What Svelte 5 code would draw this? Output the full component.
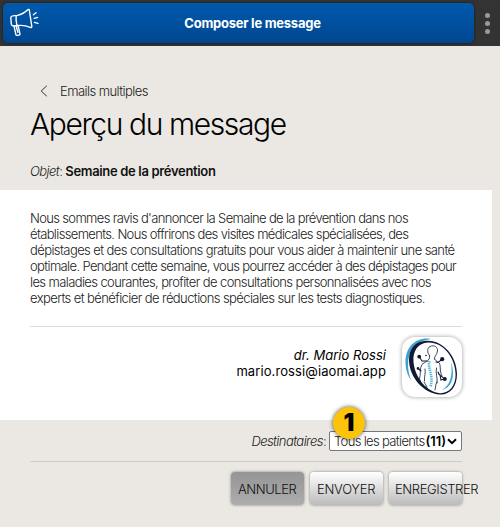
<script>
  const lines = [
    { text: "Nous sommes ravis d'annoncer la Semaine de la prévention dans nos", track: -0.66 },
    { text: 'établissements. Nous offrirons des visites médicales spécialisées, des', track: -0.65 },
    { text: 'dépistages et des consultations gratuits pour vous aider à maintenir une santé', track: -0.59 },
    { text: 'optimale. Pendant cette semaine, vous pourrez accéder à des dépistages pour', track: -0.64 },
    { text: 'les maladies courantes, profiter de consultations personnalisées avec nos', track: -0.61 },
    { text: 'experts et bénéficier de réductions spéciales sur les tests diagnostiques.', track: -0.59 }
  ];
</script>

<main>
  <header>
    <div class="bar">
      <svg class="horn" width="32" height="32" viewBox="0 0 32 32" fill="none" stroke="#fff" stroke-width="1.4" stroke-linecap="round" stroke-linejoin="round">
        <path d="M1.8 12.6Q2 11 3.8 10.9L8.3 10.4Q14.5 9.2 19 4.6Q20 4 20.3 5L22.8 21.4Q22.8 23 21.3 22.4Q15 19.8 9.3 20.5L4.4 21Q2.6 21 2.3 19.2Z" />
        <path d="M7.2 10.6Q6.6 15 8 20.6M5 21L6.9 29.6Q7.1 30.6 8.2 30.4L10 30Q11.2 29.7 10.9 28.6L9.2 20.8M7.2 21.2L8.9 27.4" />
        <path d="M24.4 9.8L27 7.8M25.2 13.4L28.6 12.4M25.4 17.4L29 18.4" />
      </svg>
      <b>Composer le message</b>
    </div>
    <div class="dots"><i></i><i></i><i></i></div>
  </header>

  <section class="top">
    <div class="back">
      <svg width="8" height="12" viewBox="0 0 8 12" fill="none" stroke="#333" stroke-width="1"><path d="M6.8.8L1.2 6L6.8 11.2" /></svg>
      <span>Emails multiples</span>
    </div>
    <h1>Aperçu du message</h1>
    <div class="subject"><em>Objet</em>: <b>Semaine de la prévention</b></div>
  </section>

  <section class="card">
    <p>{#each lines as line}<span style="letter-spacing: {line.track}px">{line.text}</span>{' '}{/each}</p>
    <div class="sign">
      <div class="who"><em>dr. Mario Rossi</em><span>mario.rossi@iaomai.app</span></div>
      <div class="logo">
        <svg width="60" height="60" viewBox="0 0 60 60" fill="none" stroke-linecap="round">
          <path d="M29 2C15-.5 3.5 9 3.5 25C3.5 33 6 39 9 43C4.5 31 5 19 11 11C16 5 22 3 29 2Z" fill="#3da2cf" />
          <path fill-rule="evenodd" fill="#101b33" d="M22 4C39 1 55 18 55 37C55 50 48 58 38 57.5C22 57 7 40 7 23C7 12 13 5 22 4ZM26 5.5C16 6 10.500 14 11.500 25C13 41 25 55 38 56.200C47 56.500 53.800 49 53.600 37C53 20 41 5 26 5.500Z" />
          <path d="M49 25C54 40 49 51 40 53C48 48 51 39 49 25Z" fill="#3da2cf" />
          <g stroke="#101b33" stroke-width=".8">
            <path d="M27.500 18.500C25 16 25 11 28 9.500C32 7.500 36 10 35.500 14C35 18 32 19 32.500 22M27.500 18.500C29 24 22 25 20 27.500C17.500 31 19 37 17.500 42M32.500 22C34 25 38 25 38 28C38.500 32 38 36 40 39" />
            <path d="M23 32C24 36 22 39 22.500 44M34.500 31C33 36 36 40 35 46M22 45C23.500 48 25 48 25 52M18 43L19 48M35 45C33 48 34 50 33 53" />
          </g>
          <path stroke="#101b33" stroke-width="1.1" d="M17.500 20L20 24L25 24M40 22.500L36 25.500L34 25M16 31.500L19 34M36 35C37 39 39 38 42.500 42M38 38L39 43L42 42" />
          <g fill="#101b33"><circle cx="17.200" cy="19.700" r="1.900" /><circle cx="40.200" cy="22.200" r="2.100" /><circle cx="42.800" cy="42" r="2" /><circle cx="16" cy="31.400" r="1.300" /><circle cx="24" cy="18.500" r=".8" /></g>
          <path d="M27.500 24C25 31 32 38 28.500 50" stroke="#55b4da" stroke-width="2.600" stroke-linecap="butt" stroke-dasharray="1.400 .8" />
        </svg>
      </div>
    </div>
  </section>

  <section class="foot">
    <div class="dest">
      <span class="label"><em>Destinataires</em>:</span>
      <div class="select">
        <span>Tous les patients</span><b>(11)</b>
        <svg width="10" height="7" viewBox="0 0 10 7" fill="none" stroke="#000" stroke-width="2"><path d="M1 1.200L5 5.200L9 1.200" /></svg>
        <div class="badge">1</div>
      </div>
    </div>
    <div class="buttons">
      <button class="cancel"><span>ANNULER</span></button>
      <button class="send"><span>ENVOYER</span></button>
      <button><span>ENREGISTRER</span></button>
    </div>
  </section>
</main>

<style>
  :global(body) { margin: 0; background: #ebe8e3; overflow: hidden; }
  main { width: 500px; height: 527px; overflow: hidden; background: #ebe8e3; font: 300 13px/16px Inter, sans-serif; color: #222; letter-spacing: -0.58px; }
  header { height: 46px; background: #333; display: flex; box-sizing: border-box; padding: 3px 0 0 3px; }
  .bar { width: 471px; height: 40px; box-sizing: border-box; padding-left: 28px; border-radius: 5px; background: linear-gradient(#0059ad, #004790); box-shadow: 0 0 3px rgba(0, 0, 0, .6); display: flex; align-items: center; justify-content: center; position: relative; color: #fff; }
  .bar b { font-weight: 700; letter-spacing: -0.25px; }
  .horn { position: absolute; left: 6px; top: 2px; }
  .dots { width: 26px; height: 40px; display: flex; flex-direction: column; gap: 3px; align-items: center; justify-content: center; }
  .dots i { width: 5px; height: 5px; border-radius: 50%; background: #999; }
  .top { height: 144px; padding-left: 30px; }
  .back { padding: 37px 0 0 10px; height: 16px; display: flex; align-items: center; gap: 12px; }
  .back span { letter-spacing: -0.57px; }
  h1 { margin: 6px 0 0; font-weight: 300; font-size: 30px; line-height: 38px; letter-spacing: -1.4px; color: #000; }
  .subject { margin-top: 20px; }
  .subject b { font-weight: 600; letter-spacing: -0.33px; color: #111; }
  .card { width: 492px; height: 230px; box-sizing: border-box; padding: 20px 30px 0; background: #fff; }
  p { margin: 0; height: 116px; border-bottom: 1px solid #ddd; }
  p span { display: block; white-space: nowrap; }
  .sign { display: flex; justify-content: flex-end; gap: 16px; padding-top: 10px; }
  .who { text-align: right; padding-top: 10px; font-weight: 400; color: #000; letter-spacing: .1px; }
  .who em { display: block; letter-spacing: .03px; }
  .who span { display: block; }
  .logo { width: 60px; height: 60px; border-radius: 13px; box-shadow: 0 0 4px rgba(0, 0, 0, .4); }
  .foot { width: 432px; margin-left: 30px; }
  .dest { height: 41px; border-bottom: 1px solid #cfccc8; display: flex; justify-content: flex-end; }
  .label { padding-top: 13px; margin-right: 3px; }
  .select { position: relative; width: 133px; height: 20px; box-sizing: border-box; margin-top: 11px; border: 1px solid #777; border-radius: 2px; background: #fff; display: flex; align-items: center; padding-left: 4px; white-space: nowrap; letter-spacing: -0.65px; }
  .select b { font-weight: 600; color: #000; margin-left: 1px; letter-spacing: 0; }
  .select svg { margin-left: 1px; }
  .badge { position: absolute; left: 3px; top: -25px; width: 32px; height: 32px; border-radius: 50%; background: #fcc30b; box-shadow: 0 0 4px rgba(0, 0, 0, .7); color: #000; font: 900 24px/32px Inter, sans-serif; letter-spacing: 0; text-align: center; }
  .buttons { display: flex; gap: 6px; justify-content: flex-end; padding-top: 10px; }
  button { width: 73px; height: 33px; border: 0; border-radius: 4px; padding: 0 0 0 6px; text-align: left; font: inherit; letter-spacing: -0.38px; color: #111; background: linear-gradient(#fff, #bbb); box-shadow: 0 0 3px rgba(0, 0, 0, .45); white-space: nowrap; }
  button.send { padding-left: 7px; letter-spacing: -0.25px; }
  button.cancel { padding-left: 7px; letter-spacing: -0.45px; background: linear-gradient(#959595, #adadad); }
</style>
